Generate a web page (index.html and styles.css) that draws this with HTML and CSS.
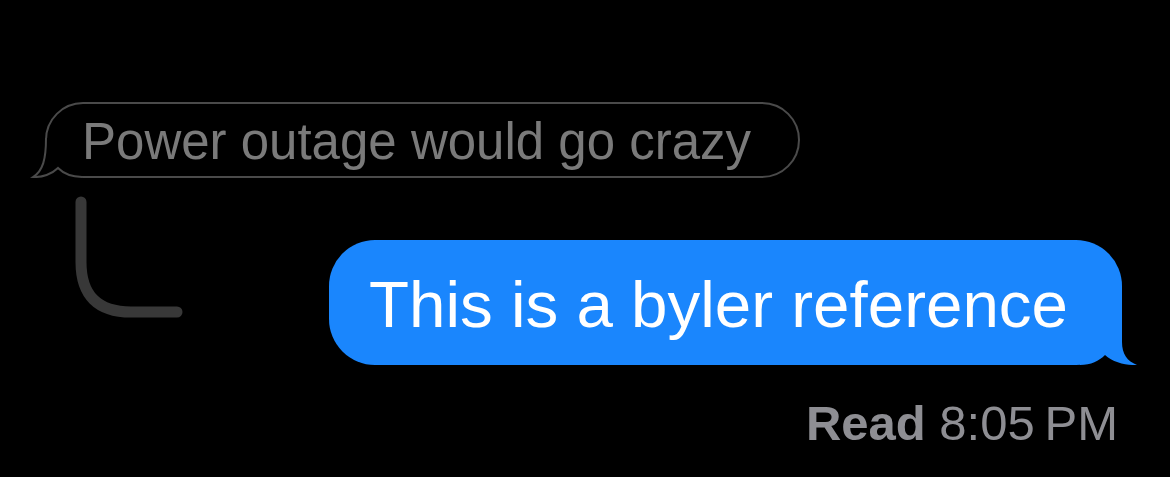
FILE: index.html
```html
<!DOCTYPE html>
<html lang="en">
<head>
    <meta charset="UTF-8">
    <meta name="viewport" content="width=device-width, initial-scale=1.0">
    <title>Messages</title>
    <link rel="stylesheet" href="styles.css">
</head>
<body>
    <div class="thread">
        <div class="quote-row">
            <div class="quote-bubble">
                <span class="quote-text">Power outage would go crazy</span>
                <svg class="quote-tail" width="52" height="40" viewBox="0 0 52 40">
                    <rect x="0" y="0" width="52" height="40" fill="#000"/>
                    <path d="M16 0 C16 21 13 33 3 39 C12 39.5 22 36 28 30 C34 36 42 39 53 39" fill="none" stroke="#4a4a4a" stroke-width="2"/>
                </svg>
            </div>
        </div>

        <div class="reply-row">
            <svg class="reply-line" width="120" height="130" viewBox="0 0 120 130">
                <path d="M11 12 L11 72 Q11 122 61 122 L107 122" fill="none" stroke="#383838" stroke-width="11" stroke-linecap="round"/>
            </svg>
            <div class="sent-bubble">
                <span class="sent-text">This is a byler reference</span>
                <svg class="sent-tail" width="60" height="50" viewBox="0 0 60 50">
                    <rect x="0" y="0" width="60" height="50" fill="#000"/>
                    <path d="M0 50 L0 0 L42 0 L42 27 C42 39 47 46 57 50 C48 50.5 33 48 25 40 C19 46 11 50 0 50 Z" fill="#1a86fd"/>
                </svg>
            </div>
        </div>

        <div class="status">
            <span class="status-read">Read</span> 8:05&#8201;PM
        </div>
    </div>
</body>
</html>
```

FILE: styles.css
```css
* {
    margin: 0;
    padding: 0;
    box-sizing: border-box;
}

body {
    background: #000;
    font-family: 'Liberation Sans', Arial, sans-serif;
    width: 1170px;
    height: 477px;
    overflow: hidden;
}

.thread {
    padding-top: 102px;
}

.quote-row {
    padding-left: 45px;
    display: flex;
}

.quote-bubble {
    position: relative;
    display: flex;
    align-items: center;
    height: 76px;
    padding: 0 47px 0 35px;
    border: 2px solid #4a4a4a;
    border-radius: 38px;
}

.quote-text {
    color: #7a7a7a;
    font-size: 51px;
    line-height: 1;
    padding-top: 2px;
    white-space: nowrap;
}

.quote-tail {
    position: absolute;
    left: -17px;
    bottom: -2px;
    display: block;
}

.reply-row {
    display: flex;
    justify-content: space-between;
    align-items: flex-start;
    padding: 12px 48px 0 70px;
}

.reply-line {
    display: block;
}

.sent-bubble {
    position: relative;
    display: flex;
    align-items: center;
    height: 125px;
    margin-top: 50px;
    padding: 0 54px 0 40px;
    background: #1a86fd;
    border-radius: 46px;
}

.sent-text {
    color: #fff;
    font-size: 65.5px;
    line-height: 1;
    padding-top: 5px;
    white-space: nowrap;
}

.sent-tail {
    position: absolute;
    right: -18px;
    bottom: 0;
    display: block;
}

.status {
    text-align: right;
    padding: 34px 52px 0 0;
    color: #8e8e93;
    font-size: 49px;
    line-height: 1;
}

.status-read {
    font-weight: bold;
}
```
